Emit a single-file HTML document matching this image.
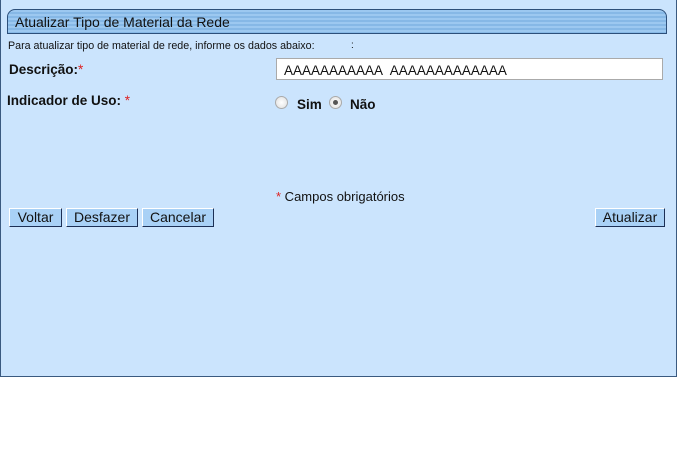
<!DOCTYPE html>
<html><head><style>
body{margin:0;width:693px;height:468px;background:#fff;position:relative;font-family:"Liberation Sans",sans-serif;overflow:hidden}
.panel{position:absolute;left:0;top:0;width:675px;height:376px;background:#cbe4fd;border:1px solid #3a5a80;border-top:none}
.title{position:absolute;left:7px;top:9px;width:660px;height:25px;border:1px solid #2c4f7a;border-radius:8px 8px 0 0;background:repeating-linear-gradient(#9cc8f0 0 2px,#86b8e6 2px 4px);box-sizing:border-box;font-size:14px;color:#111;padding:4px 0 0 7px}
.t{position:absolute;color:#111}
.btn{position:absolute;top:208px;height:19px;background:#a9d1f6;border:1px solid #fff;border-right-color:#1c2f55;border-bottom-color:#1c2f55;box-sizing:border-box;font-size:14px;line-height:17px;text-align:center;color:#111}
.radio{position:absolute;width:11px;height:11px;border-radius:50%;border:1px solid #aaa;background:radial-gradient(#fff,#ddd)}
.red{color:#d22}
.b{font-size:13.5px;font-weight:bold}
</style></head><body>
<div class="panel"></div>
<div class="title">Atualizar Tipo de Material da Rede</div>
<div class="t" style="left:8px;top:40px;font-size:10.7px">Para atualizar tipo de material de rede, informe os dados abaixo:</div>
<div class="t" style="left:351px;top:40px;font-size:10px">:</div>
<div class="t b" style="left:9px;top:62px">Descrição:<span class="red" style="font-weight:normal">*</span></div>
<div style="position:absolute;left:276px;top:58px;width:387px;height:22px;background:#fff;border:1px solid #aaa;box-sizing:border-box;font-size:13.5px;padding:4px 0 0 7px;color:#111">AAAAAAAAAAA&nbsp; AAAAAAAAAAAAA</div>
<div class="t b" style="left:7px;top:93px">Indicador de Uso: <span class="red" style="font-weight:normal">*</span></div>
<div class="radio" style="left:275px;top:96px"></div>
<div class="t b" style="left:297px;top:97px">Sim</div>
<div class="radio" style="left:329px;top:96px"><div style="position:absolute;left:3px;top:3px;width:5px;height:5px;border-radius:50%;background:#555"></div></div>
<div class="t b" style="left:350px;top:97px">Não</div>
<div class="t" style="left:276px;top:189px;font-size:13px"><span class="red">*</span> Campos obrigatórios</div>
<div class="btn" style="left:9px;width:53px">Voltar</div>
<div class="btn" style="left:66px;width:72px">Desfazer</div>
<div class="btn" style="left:142px;width:72px">Cancelar</div>
<div class="btn" style="left:595px;width:70px">Atualizar</div>
</body></html>
